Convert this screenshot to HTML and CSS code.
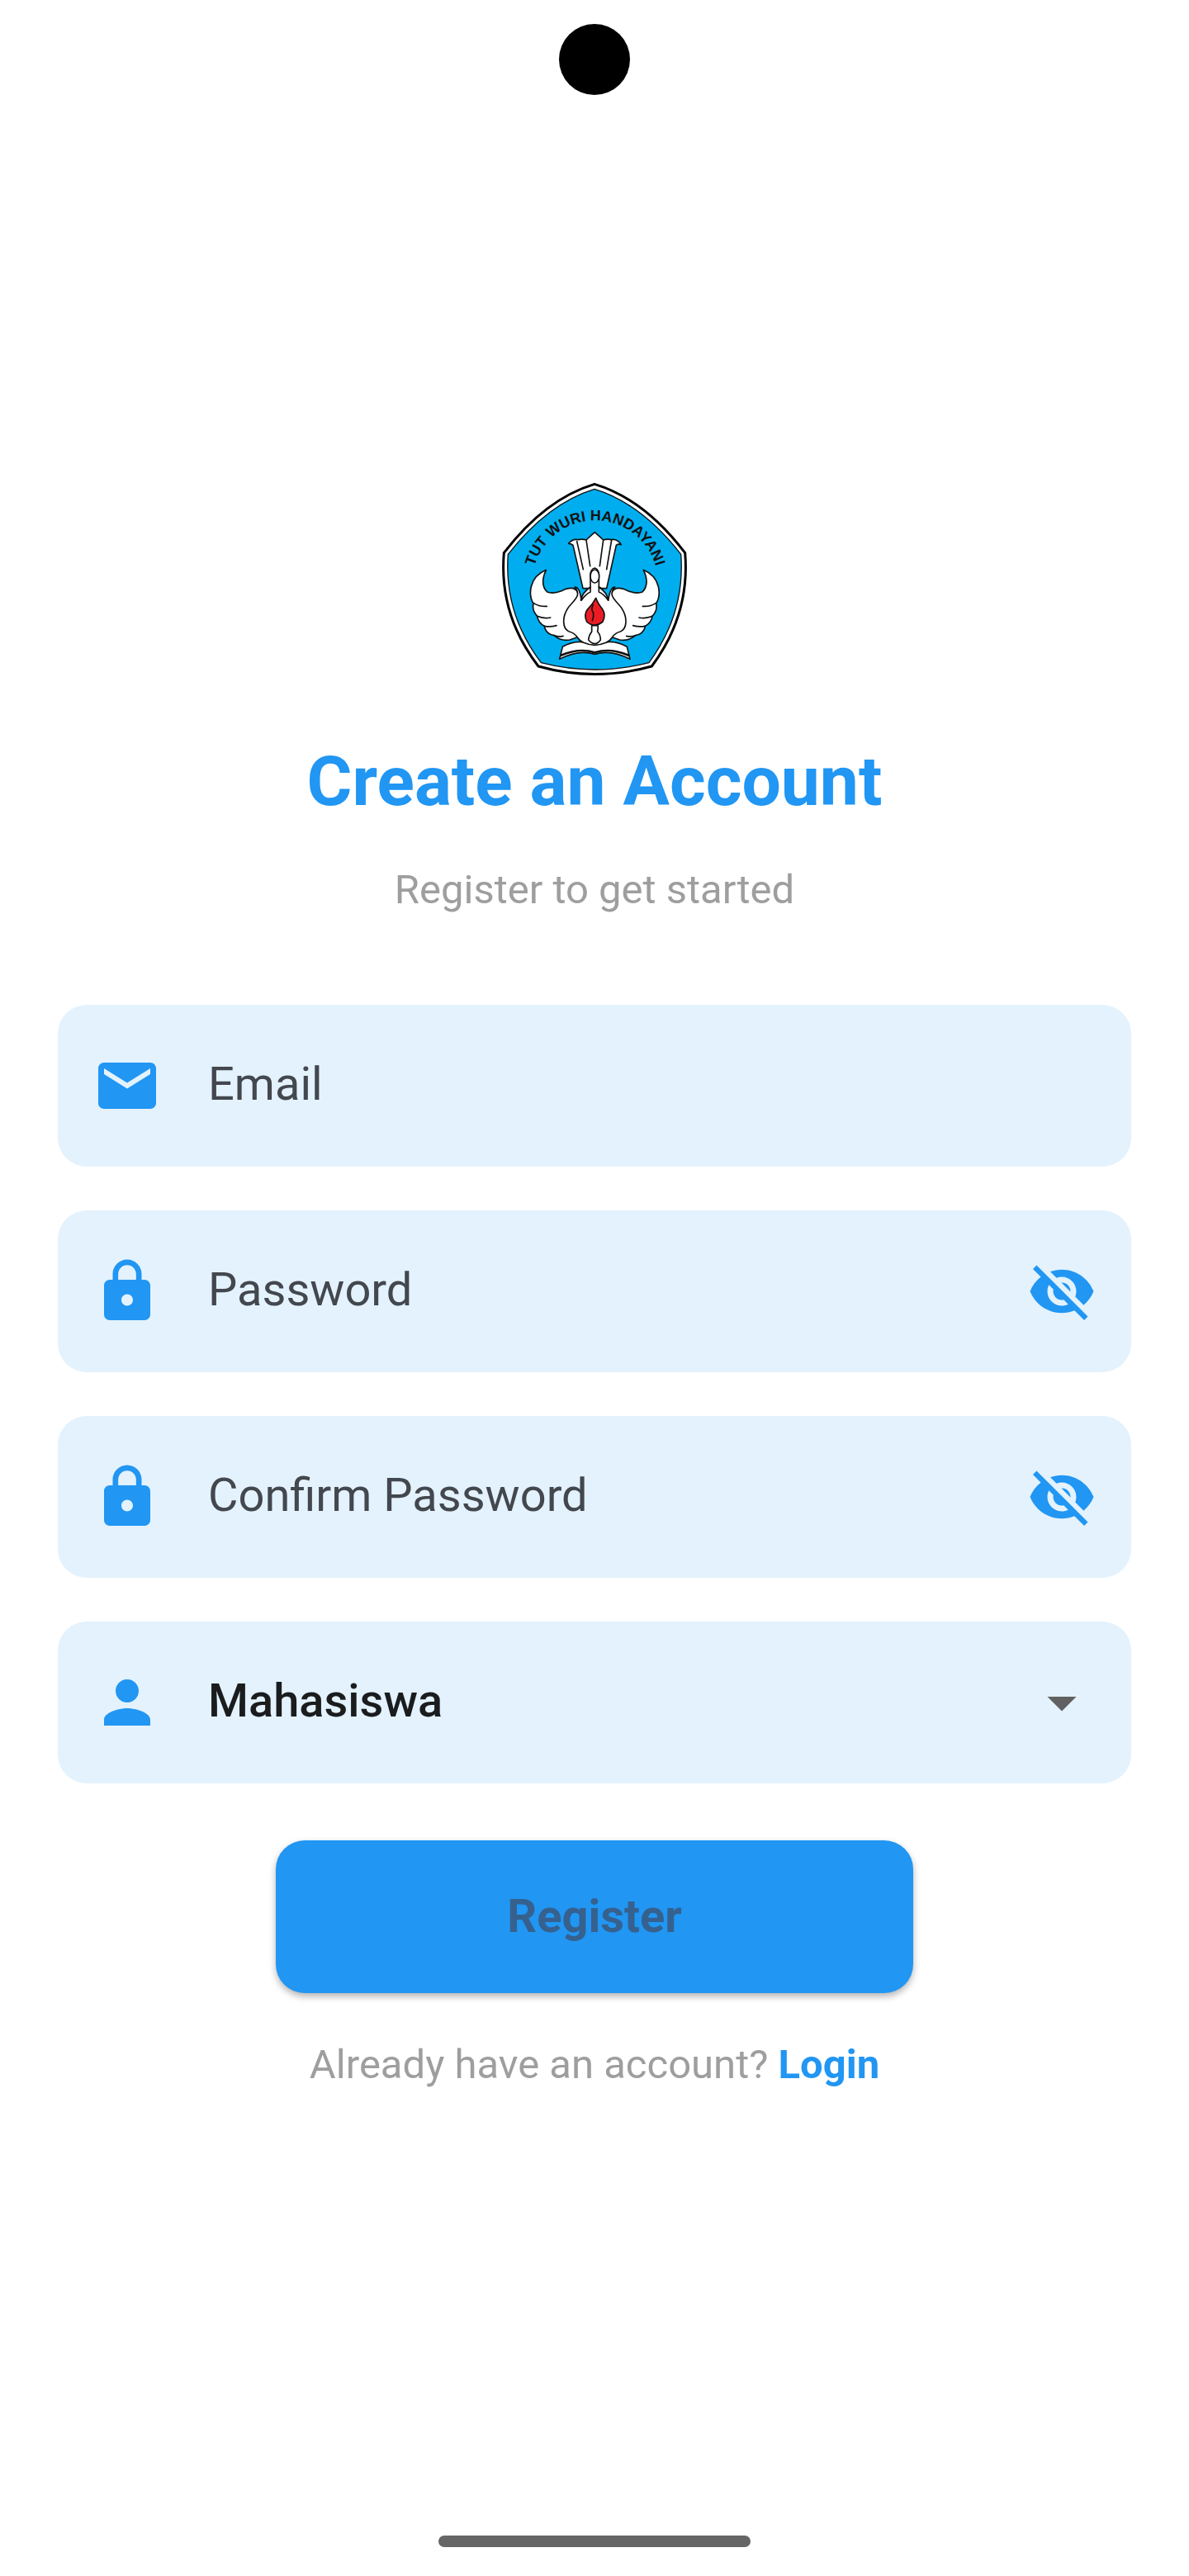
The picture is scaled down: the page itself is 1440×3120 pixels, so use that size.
FILE: index.html
```html
<!DOCTYPE html>
<html lang="en">
<head>
<meta charset="utf-8">
<meta name="viewport" content="width=device-width, initial-scale=1">
<title>Create an Account</title>
<link rel="stylesheet" href="styles.css">
</head>
<body>
<div class="screen">
  <header class="status"><span class="camera"></span></header>
  <main class="content">
    <svg class="logo" viewBox="0 0 780 780" role="img" aria-label="Tut Wuri Handayani">
      <path d="M390 46Q570 100 719 296Q738 520 598 708Q390 765 186 708Q42 520 61 296Q210 100 390 46Z" fill="#fff" stroke="#000" stroke-width="9"/>
      <path d="M390 64Q560 116 704 301Q720 515 588 695Q390 745 196 695Q60 515 76 301Q220 116 390 64Z" fill="#00aeef" stroke="#111" stroke-width="4"/>
      <path id="motto" d="M163 407A229 229 0 0 1 621 407" fill="none"/>
      <text class="motto" text-anchor="middle"><textPath href="#motto" startOffset="50%">TUT WURI HANDAYANI</textPath></text>
      <g fill="#fff" stroke="#111" stroke-width="5" stroke-linejoin="round" stroke-linecap="round">
        <path d="M348 425L312 268Q305 262 296 262Q310 244 330 248Q345 244 360 249Q375 235 391 221Q407 235 422 249Q437 244 452 248Q472 244 487 266Q476 262 469 268L434 425Z"/>
        <path d="M326 254L349 356M360 249L374 344M422 249L409 344M452 249L434 356" fill="none"/>
        <path d="M214 358C150 385 150 450 168 480Q162 505 182 526Q186 550 208 562Q212 590 244 596Q268 618 300 612L335 600L330 440Q315 412 270 434Q240 446 218 438Q190 410 214 358Z"/>
        <path d="M568 358C632 385 632 450 614 480Q620 505 600 526Q596 550 574 562Q570 590 538 596Q514 618 482 612L447 600L452 440Q467 412 512 434Q542 446 564 438Q592 410 568 358Z"/>
        <path d="M168 478Q190 492 217 490M182 526Q205 536 230 531M208 562Q230 566 252 560M244 596Q258 602 276 598M614 478Q592 492 565 490M600 526Q577 536 552 531M574 562Q552 566 530 560M538 596Q524 602 506 598" fill="none"/>
        <path d="M263 682L274 637Q330 605 391 631Q452 605 508 637L519 682Q450 646 391 664Q332 646 263 682Z"/>
        <path d="M268 668Q335 640 391 658Q447 640 514 668" fill="none" stroke-width="8"/>
        <path d="M318 420C344 450 318 466 295 494C270 530 274 572 298 582C330 588 324 612 350 622Q391 640 432 622C458 612 452 588 484 582C508 572 512 530 487 494C464 466 438 450 464 420Q448 418 440 468L412 422L406 420V372Q404 355 391 351Q377 355 375 372V424L342 468Q336 418 318 420Z"/>
        <path d="M340 468Q346 440 375 420V438Q360 444 342 468ZM440 468Q436 440 406 420V438Q422 444 440 468Z"/>
        <ellipse cx="391" cy="381" rx="16" ry="24"/>
        <path d="M380 560H402Q404 564 401 582Q412 594 412 612Q392 640 368 612Q370 594 380 582Z"/>
        <path d="M395 460Q402 480 420 502Q432 522 420 546Q406 558 391 558Q374 558 362 546Q350 522 364 502Q384 482 395 460Z" fill="#ec1c24"/>
        <path d="M385 485Q376 500 386 515Q388 528 382 542" fill="none"/>
      </g>
    </svg>
    <h1 class="title">Create an Account</h1>
    <p class="subtitle">Register to get started</p>
    <form class="form">
      <div class="field">
        <svg class="icon" viewBox="0 0 24 24" aria-hidden="true"><path d="M20 4H4c-1.100 0-1.990.9-1.990 2L2 18c0 1.100.9 2 2 2h16c1.100 0 2-.9 2-2V6c0-1.100-.9-2-2-2zm0 4l-8 5-8-5V6l8 5 8-5v2z"/></svg>
        <input class="input" type="email" placeholder="Email" aria-label="Email">
      </div>
      <div class="field">
        <svg class="icon" viewBox="0 0 24 24" aria-hidden="true"><path d="M18 8h-1V6c0-2.760-2.240-5-5-5S7 3.240 7 6v2H6c-1.100 0-2 .9-2 2v10c0 1.100.9 2 2 2h12c1.100 0 2-.9 2-2V10c0-1.100-.9-2-2-2zm-6 9c-1.100 0-2-.9-2-2s.9-2 2-2 2 .9 2 2-.9 2-2 2zm3.100-9H8.900V6c0-1.710 1.390-3.100 3.100-3.100 1.710 0 3.100 1.390 3.100 3.100v2z"/></svg>
        <input class="input" type="password" placeholder="Password" aria-label="Password">
        <button class="toggle" type="button" aria-label="Show password"><svg class="icon" viewBox="0 0 24 24" aria-hidden="true"><path d="M12 7c2.760 0 5 2.240 5 5 0 .65-.13 1.260-.36 1.830l2.920 2.920c1.510-1.260 2.700-2.890 3.430-4.750-1.730-4.390-6-7.500-11-7.500-1.400 0-2.740.25-3.980.7l2.160 2.160C10.740 7.130 11.350 7 12 7zM2 4.270l2.280 2.280.46.46C3.080 8.300 1.780 10.020 1 12c1.730 4.390 6 7.500 11 7.500 1.550 0 3.030-.3 4.380-.84l.42.42L19.730 22 21 20.730 3.270 3 2 4.270zM7.530 9.800l1.550 1.550c-.05.21-.08.43-.08.65 0 1.660 1.340 3 3 3 .22 0 .44-.03.65-.08l1.550 1.550c-.67.33-1.410.53-2.200.53-2.760 0-5-2.240-5-5 0-.79.2-1.530.53-2.200zm4.310-.78l3.150 3.150.02-.16c0-1.660-1.340-3-3-3l-.17.01z"/></svg></button>
      </div>
      <div class="field">
        <svg class="icon" viewBox="0 0 24 24" aria-hidden="true"><path d="M18 8h-1V6c0-2.760-2.240-5-5-5S7 3.240 7 6v2H6c-1.100 0-2 .9-2 2v10c0 1.100.9 2 2 2h12c1.100 0 2-.9 2-2V10c0-1.100-.9-2-2-2zm-6 9c-1.100 0-2-.9-2-2s.9-2 2-2 2 .9 2 2-.9 2-2 2zm3.100-9H8.900V6c0-1.710 1.390-3.100 3.100-3.100 1.710 0 3.100 1.390 3.100 3.100v2z"/></svg>
        <input class="input" type="password" placeholder="Confirm Password" aria-label="Confirm Password">
        <button class="toggle" type="button" aria-label="Show password"><svg class="icon" viewBox="0 0 24 24" aria-hidden="true"><path d="M12 7c2.760 0 5 2.240 5 5 0 .65-.13 1.260-.36 1.830l2.920 2.920c1.510-1.260 2.700-2.890 3.430-4.750-1.730-4.390-6-7.500-11-7.500-1.400 0-2.740.25-3.980.7l2.160 2.160C10.740 7.130 11.350 7 12 7zM2 4.270l2.280 2.280.46.46C3.080 8.300 1.780 10.020 1 12c1.730 4.390 6 7.500 11 7.500 1.550 0 3.030-.3 4.380-.84l.42.42L19.730 22 21 20.730 3.270 3 2 4.270zM7.530 9.800l1.550 1.550c-.05.21-.08.43-.08.65 0 1.660 1.340 3 3 3 .22 0 .44-.03.65-.08l1.550 1.550c-.67.33-1.410.53-2.200.53-2.760 0-5-2.240-5-5 0-.79.2-1.530.53-2.200zm4.310-.78l3.150 3.150.02-.16c0-1.660-1.340-3-3-3l-.17.01z"/></svg></button>
      </div>
      <div class="field">
        <svg class="icon" viewBox="0 0 24 24" aria-hidden="true"><path d="M12 12c2.210 0 4-1.790 4-4s-1.790-4-4-4-4 1.790-4 4 1.790 4 4 4zm0 2c-2.670 0-8 1.340-8 4v2h16v-2c0-2.660-5.330-4-8-4z"/></svg>
        <select class="input select" aria-label="Role"><option>Mahasiswa</option></select>
        <svg class="icon arrow" viewBox="0 0 24 24" aria-hidden="true"><path d="M7 10l5 5 5-5z"/></svg>
      </div>
      <button class="submit" type="submit">Register</button>
    </form>
    <p class="signin">Already have an account? <a class="link" href="#login">Login</a></p>
  </main>
  <footer class="navbar"><span class="handle"></span></footer>
</div>
</body>
</html>
```
FILE: styles.css
```css
* {
  box-sizing: border-box;
}

body {
  margin: 0;
  background: #fff;
  font-family: Roboto, "Liberation Sans", sans-serif;
}

.screen {
  display: flex;
  flex-direction: column;
  min-height: 100vh;
}

.status {
  display: flex;
  justify-content: center;
  padding-top: 29px;
}

.camera {
  width: 86px;
  height: 86px;
  border-radius: 50%;
  background: #000;
}

.content {
  flex: 1;
  display: flex;
  flex-direction: column;
  align-items: center;
  justify-content: center;
  padding: 0 70px 80px;
}

.logo {
  width: 260px;
  height: 260px;
}

.motto {
  font-family: "Liberation Sans", Arial, sans-serif;
  font-size: 54px;
  font-weight: 700;
  fill: #111;
}

.title {
  margin: 56px 0 36px;
  color: #2196f3;
  font-size: 84px;
  font-weight: 700;
  line-height: 120px;
}

.subtitle,
.signin {
  margin: 0;
  color: #9e9e9e;
  font-size: 49px;
  line-height: 70px;
}

.form {
  display: flex;
  flex-direction: column;
  gap: 53px;
  width: 100%;
  margin: 104px 0 52px;
}

.field {
  display: flex;
  align-items: center;
  height: 196px;
  padding: 0 42px;
  border-radius: 35px;
  background: #e3f2fd;
}

.icon {
  display: block;
  flex: none;
  width: 84px;
  height: 84px;
  fill: #2196f3;
}

.arrow {
  fill: #616161;
}

.input {
  flex: 1;
  min-width: 0;
  height: 100%;
  padding: 0 56px 4px;
  border: 0;
  outline: 0;
  background: transparent;
  color: #1a1c1e;
  font: inherit;
  font-size: 56px;
}

.input::placeholder {
  color: #43474e;
  opacity: 1;
}

.select {
  appearance: none;
  font-weight: 500;
}

.toggle {
  padding: 0;
  border: 0;
  background: none;
}

.submit {
  align-self: center;
  margin-top: 16px;
  padding: 59px 280px;
  border: 0;
  border-radius: 35px;
  background: #2196f3;
  box-shadow: 0 4px 8px rgba(0, 0, 0, 0.3);
  color: #36618e;
  font: inherit;
  font-size: 56px;
  font-weight: 700;
  line-height: 67px;
}

.link {
  color: #2196f3;
  font-weight: 700;
  text-decoration: none;
}

.navbar {
  display: flex;
  justify-content: center;
  padding-bottom: 35px;
}

.handle {
  width: 378px;
  height: 14px;
  border-radius: 7px;
  background: #666;
}
```
